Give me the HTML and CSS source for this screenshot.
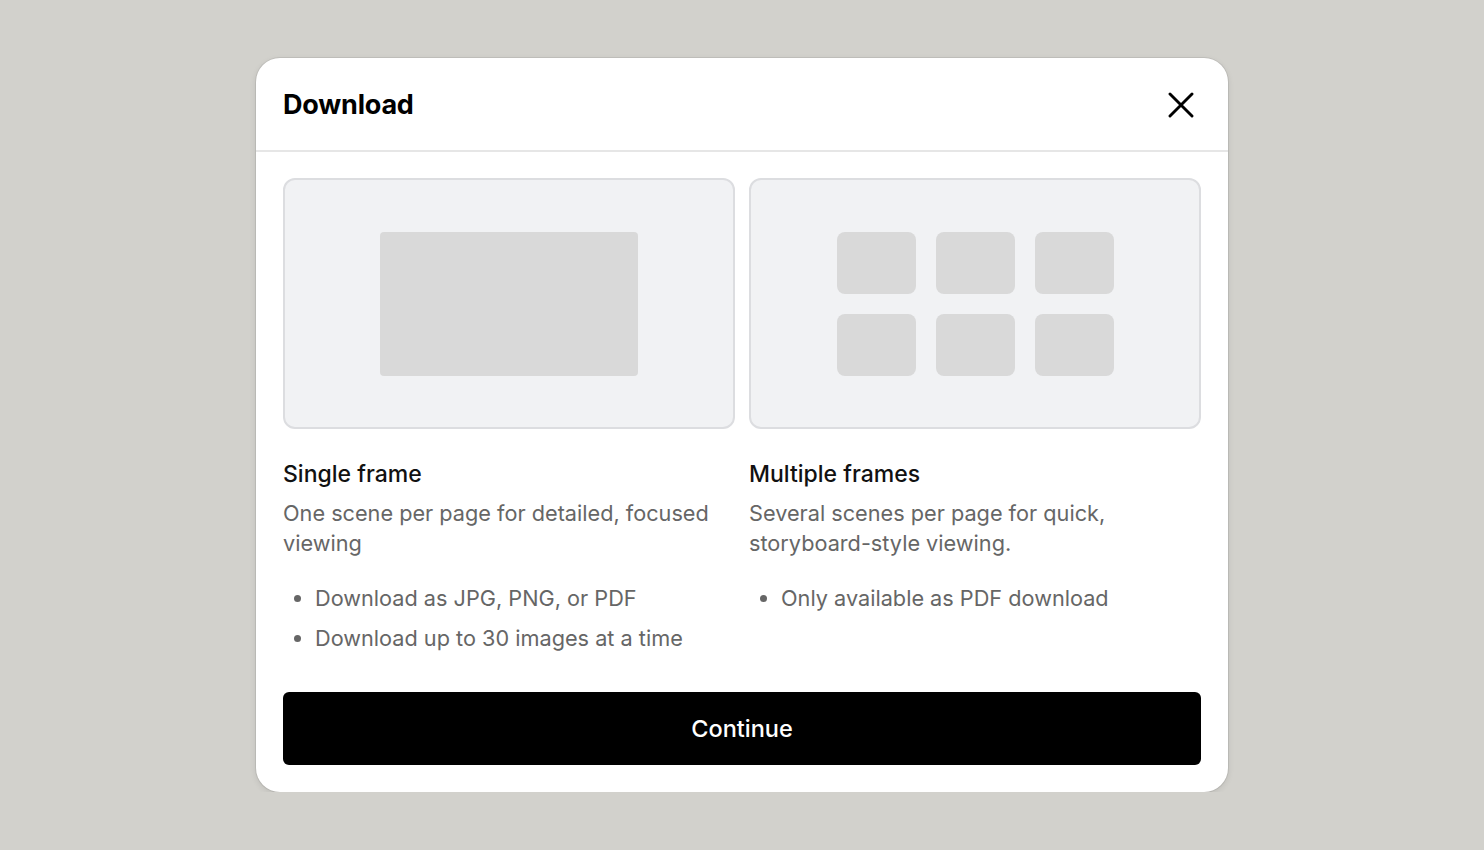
FILE: index.html
```html
<!DOCTYPE html>
<html lang="en">
<head>
  <meta charset="UTF-8">
  <title>Download</title>
  <meta name="viewport" content="width=device-width, initial-scale=1">
  <link rel="stylesheet" href="styles.css">
</head>
<body>
  <div class="modal">
    <div class="modal-header">
      <h2>Download</h2>
      <button class="close-btn" aria-label="Close">
        <svg width="26" height="26" viewBox="0 0 26 26" fill="none" stroke="#000" stroke-width="2.9" stroke-linecap="round">
          <path d="M2 2 L24 24 M24 2 L2 24"/>
        </svg>
      </button>
    </div>
    <div class="modal-body">
      <div class="options">
        <div class="option">
          <div class="preview">
            <div class="frame-single"></div>
          </div>
          <h3>Single frame</h3>
          <p>One scene per page for detailed, focused viewing</p>
          <ul>
            <li>Download as JPG, PNG, or PDF</li>
            <li>Download up to 30 images at a time</li>
          </ul>
        </div>
        <div class="option">
          <div class="preview">
            <div class="frame-grid">
              <span></span><span></span><span></span>
              <span></span><span></span><span></span>
            </div>
          </div>
          <h3>Multiple frames</h3>
          <p>Several scenes per page for quick, storyboard-style viewing.</p>
          <ul>
            <li>Only available as PDF download</li>
          </ul>
        </div>
      </div>
      <button class="continue-btn">Continue</button>
    </div>
  </div>
</body>
</html>
```

FILE: styles.css
```css
body {
  background: #d2d1cc;
  font-family: Inter, "Noto Sans", Arial, sans-serif;
  margin: 0;
  padding: 58px 0 0 0;
}
.modal {
  width: 972px;
  margin: 0 0 0 256px;
  background: #fff;
  border-radius: 24px;
  box-shadow: 0 0 0 1px rgba(0,0,0,0.07), 0 2px 6px rgba(0,0,0,0.1);
  overflow: hidden;
}
.modal-header {
  display: flex;
  align-items: center;
  justify-content: space-between;
  height: 92px;
  padding: 0 34px 0 27px;
  border-bottom: 2px solid #e6e6e6;
}
h2 {
  margin: 0;
  font-size: 27px;
  font-weight: 700;
  color: #000;
  letter-spacing: -0.2px;
}
.close-btn {
  background: none;
  border: none;
  padding: 0;
  width: 26px;
  height: 26px;
  cursor: pointer;
  margin-top: 2px;
}
.close-btn svg {
  display: block;
}
.modal-body {
  padding: 26px 27px 27px 27px;
}
.options {
  display: grid;
  grid-template-columns: 452px 452px;
  gap: 14px;
}
.preview {
  height: 251px;
  box-sizing: border-box;
  background: #f1f2f4;
  border: 2px solid #dcdde0;
  border-radius: 12px;
  display: flex;
  align-items: center;
  justify-content: center;
}
.frame-single {
  width: 258px;
  height: 144px;
  background: #d9d9d9;
  border-radius: 4px;
}
.frame-grid {
  display: grid;
  grid-template-columns: repeat(3, 79px);
  grid-template-rows: repeat(2, 62px);
  gap: 20px;
}
.frame-grid span {
  background: #d9d9d9;
  border-radius: 8px;
}
h3 {
  margin: 31px 0 10px 0;
  font-size: 23px;
  font-weight: 500;
  color: #111;
  line-height: 28px;
}
p {
  margin: 0;
  font-size: 21.7px;
  line-height: 30px;
  color: #666;
}
ul {
  margin: 25px 0 0 0;
  padding: 0 0 0 32px;
  color: #666;
  font-size: 21.7px;
  line-height: 30px;
}
li {
  margin-bottom: 10px;
}
.continue-btn {
  display: block;
  width: 100%;
  height: 73px;
  margin-top: 29px;
  background: #000;
  color: #fff;
  border: none;
  border-radius: 6px;
  font-family: inherit;
  font-size: 23.5px;
  font-weight: 500;
  cursor: pointer;
}
```
